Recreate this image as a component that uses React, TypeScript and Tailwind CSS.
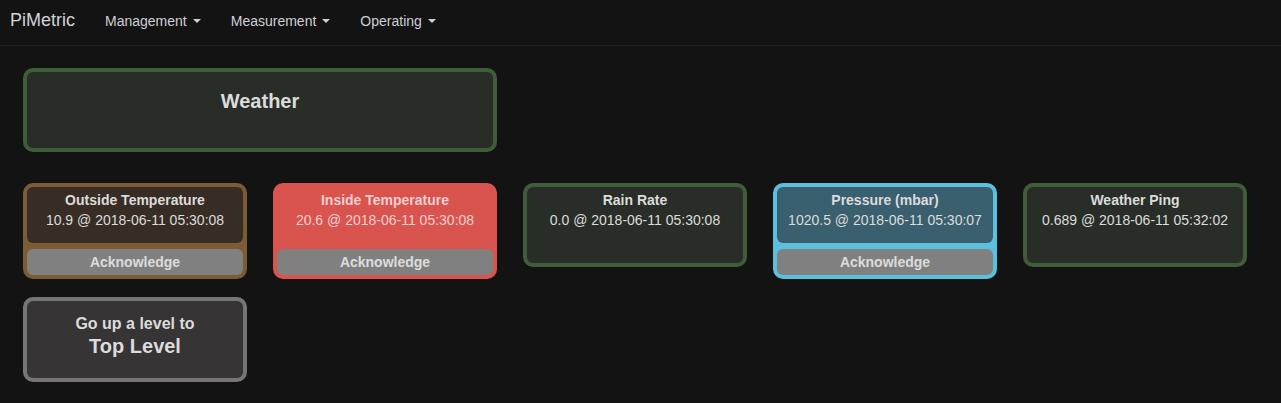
import { ReactNode } from "react";

type Sensor = {
  name: string;
  value: string;
  border: string;
  body: string;
  text: string;
  ack: boolean;
};

const sensors: Array<Sensor> = [
  {
    name: "Outside Temperature",
    value: "10.9 @ 2018-06-11 05:30:08",
    border: "bg-[#7b5c34]",
    body: "bg-[#372d25]",
    text: "text-[#dcdcdc]",
    ack: true,
  },
  {
    name: "Inside Temperature",
    value: "20.6 @ 2018-06-11 05:30:08",
    border: "bg-[#d9534f]",
    body: "bg-[#d9534f]",
    text: "text-[#f1cfce]",
    ack: true,
  },
  {
    name: "Rain Rate",
    value: "0.0 @ 2018-06-11 05:30:08",
    border: "bg-[#3e5d38]",
    body: "bg-[#282e27]",
    text: "text-[#dcdcdc]",
    ack: false,
  },
  {
    name: "Pressure (mbar)",
    value: "1020.5 @ 2018-06-11 05:30:07",
    border: "bg-[#5bc0de]",
    body: "bg-[#3a5f6e]",
    text: "text-[#dcdcdc]",
    ack: true,
  },
  {
    name: "Weather Ping",
    value: "0.689 @ 2018-06-11 05:32:02",
    border: "bg-[#3e5d38]",
    body: "bg-[#282e27]",
    text: "text-[#dcdcdc]",
    ack: false,
  },
];

const NavItem = ({ children }: { children: ReactNode }) => (
  <div className="flex items-center px-[15px] pb-[3px] text-[14px] text-[#cdd0d6] cursor-pointer">
    {children}
    <span className="ml-[6px] w-0 h-0 border-x-4 border-x-transparent border-t-4 border-t-[#cdd0d6]" />
  </div>
);

const Card = ({ item }: { item: Sensor }) => (
  <div
    className={`w-[224px] rounded-[10px] p-1 flex flex-col gap-[6px] ${item.border} ${item.text}`}
  >
    <div
      className={`rounded-[6px] pt-[3px] text-center text-[14px] leading-[20px] ${item.body} ${
        item.ack ? "h-[56px]" : "h-[76px]"
      }`}
    >
      <div className="font-bold">{item.name}</div>
      <div>{item.value}</div>
    </div>
    {item.ack && (
      <div className="h-[26px] rounded-[6px] bg-[#808080] flex items-center justify-center text-[14px] font-bold text-[#dcdcdc]">
        Acknowledge
      </div>
    )}
  </div>
);

export default function App() {
  return (
    <div
      className="min-h-[403px] bg-[#131313]"
      style={{ fontFamily: '"Liberation Sans", Arial, sans-serif' }}
    >
      <nav className="h-[46px] flex border-b border-[#222222]">
        <div className="pl-[10px] pr-[15px] pb-[5px] flex items-center text-[18px] text-[#d2d4d9]">
          PiMetric
        </div>
        <NavItem>Management</NavItem>
        <NavItem>Measurement</NavItem>
        <NavItem>Operating</NavItem>
      </nav>

      <div className="pl-[23px] pt-[22px]">
        <div className="w-[474px] h-[84px] rounded-[10px] p-1 bg-[#3e5d38]">
          <div className="h-full rounded-[6px] bg-[#282e27] pt-[18px] text-center text-[20px] font-bold leading-[22px] text-[#dcdcdc]">
            Weather
          </div>
        </div>

        <div className="mt-[31px] flex items-start gap-[26px]">
          {sensors.map((item, index) => (
            <Card item={item} key={index} />
          ))}
        </div>

        <div className="mt-[18px] w-[224px] h-[85px] rounded-[10px] p-1 bg-[#767676]">
          <div className="h-full rounded-[6px] bg-[#363435] pt-[13px] text-center font-bold text-[#dcdcdc]">
            <div className="text-[16px] leading-[20px]">Go up a level to</div>
            <div className="text-[20px] leading-[24px]">Top Level</div>
          </div>
        </div>
      </div>
    </div>
  );
}
